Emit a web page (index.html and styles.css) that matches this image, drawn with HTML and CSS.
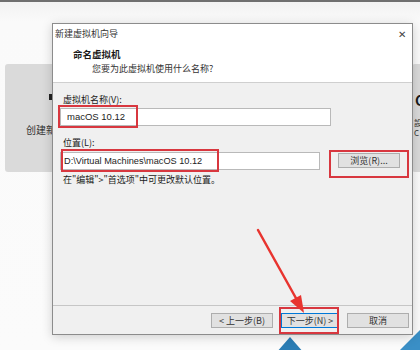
FILE: index.html
```html
<!DOCTYPE html>
<html lang="zh-CN">
<head>
    <meta charset="UTF-8">
    <title>新建虚拟机向导</title>
    <link rel="stylesheet" href="styles.css">
</head>
<body>
    <div class="desktop">
        <div class="card card-left">
            <span class="card-mark"></span>
            <span class="card-text">创建新虚拟机</span>
        </div>
        <div class="card card-right">
            <span class="card-title">C</span>
            <span class="card-small">設<br>C</span>
        </div>
        <div class="wallpaper-tri"></div>
        <div class="wallpaper-corner"></div>

        <div class="dialog">
            <div class="titlebar">
                <span>新建虚拟机向导</span>
                <span class="close">✕</span>
            </div>
            <div class="header">
                <h1>命名虚拟机</h1>
                <p>您要为此虚拟机使用什么名称?</p>
            </div>
            <div class="body">
                <label class="field-label">虚拟机名称(V):</label>
                <div class="input input-name">macOS 10.12</div>
                <label class="field-label second">位置(L):</label>
                <div class="row">
                    <div class="input input-path">D:\Virtual Machines\macOS 10.12</div>
                    <div class="button browse">浏览(R)...</div>
                </div>
                <p class="hint">在"编辑">"首选项"中可更改默认位置。</p>
            </div>
            <div class="footer">
                <div class="button">&lt; 上一步(B)</div>
                <div class="button default">下一步(N) &gt;</div>
                <div class="button">取消</div>
            </div>
        </div>

        <!-- 红色标注 -->
        <div class="mark mark-name"></div>
        <div class="mark mark-path"></div>
        <div class="mark mark-browse"></div>
        <div class="mark mark-next"></div>

        <svg class="arrow" width="420" height="350" viewBox="0 0 420 350">
            <line x1="258" y1="230" x2="297" y2="300" stroke="#e8342f" stroke-width="2.5" stroke-linecap="round"/>
            <polygon points="304,313 290,301 301,295" fill="#e8342f"/>
        </svg>
    </div>
</body>
</html>
```

FILE: styles.css
```css
body {
    margin: 0;
    font-family: "Microsoft YaHei", "Noto Sans CJK SC", "Noto Sans", sans-serif;
    color: #1a1a1a;
}

.desktop {
    position: relative;
    width: 420px;
    height: 350px;
    overflow: hidden;
    background: linear-gradient(#f2f2f2, #fafafa 20px, #fbfbfb);
    border-top: 2px solid #6f6f6f;
    box-sizing: border-box;
}

/* 背景里的卡片 */
.card {
    position: absolute;
    top: 62px;
    height: 108px;
    background-color: #dadada;
    border-radius: 3px;
}
.card-left {
    left: 5px;
    width: 60px;
}
.card-mark {
    position: absolute;
    left: 44px;
    top: 30px;
    width: 3px;
    height: 6px;
    background: #222;
}
.card-text {
    position: absolute;
    left: 21px;
    top: 58px;
    font-size: 10px;
    white-space: nowrap;
    color: #333;
}
.card-right {
    left: 412px;
    width: 8px;
    border-radius: 3px 0 0 3px;
    overflow: hidden;
}
.card-title {
    position: absolute;
    left: 3px;
    top: 28px;
    font-size: 14px;
    font-weight: bold;
    line-height: 16px;
}
.card-small {
    position: absolute;
    left: 2px;
    top: 54px;
    font-size: 8px;
    line-height: 10px;
    color: #333;
}

.wallpaper-tri {
    position: absolute;
    left: 276px;
    top: 335px;
    width: 0;
    height: 0;
    border-left: 14px solid transparent;
    border-right: 14px solid transparent;
    border-bottom: 16px solid #2b7db5;
}
.wallpaper-corner {
    position: absolute;
    left: 396px;
    top: 326px;
    width: 0;
    height: 0;
    border-left: 26px solid transparent;
    border-bottom: 26px solid #3a8fc6;
}

/* 对话框 */
.dialog {
    position: absolute;
    left: 52px;
    top: 21px;
    width: 361px;
    height: 312px;
    box-sizing: border-box;
    border: 1px solid #8c8c8c;
    background: #f0f0f0;
    display: flex;
    flex-direction: column;
    box-shadow: 0 2px 10px rgba(0,0,0,0.18);
    font-size: 9px;
}
.titlebar {
    height: 19px;
    background: #fff;
    display: flex;
    justify-content: space-between;
    align-items: center;
    padding: 0 6px 0 2px;
    color: #333;
}
.close {
    font-size: 10px;
    color: #444;
}
.header {
    height: 40px;
    background: #fff;
    border-bottom: 1px solid #cfcfcf;
    padding-top: 5px;
    box-sizing: border-box;
}
.header h1 {
    margin: 0;
    padding-left: 20px;
    font-size: 9.5px;
    line-height: 13px;
    font-weight: bold;
}
.header p {
    margin: 1px 0 0;
    padding-left: 39px;
    font-size: 9px;
    line-height: 14px;
    color: #333;
}

.body {
    flex: 1;
    padding: 10px 0 0 7px;
    display: flex;
    flex-direction: column;
    align-items: flex-start;
}
.field-label {
    padding-left: 3px;
    line-height: 14px;
    margin-bottom: 1px;
}
.field-label.second {
    margin-top: 10px;
    margin-bottom: 2px;
}
.input {
    height: 18px;
    box-sizing: border-box;
    background: #fff;
    border: 1px solid #b9b9b9;
    padding-left: 6px;
    font-family: "Liberation Sans", "Noto Sans CJK SC", sans-serif;
    font-size: 9.5px;
    line-height: 16px;
    color: #222;
}
.input-name {
    width: 271px;
}
.row {
    display: flex;
    align-items: flex-start;
    gap: 18px;
}
.input-path {
    width: 260px;
    padding-left: 3px;
    font-size: 9.2px;
}
.hint {
    margin: 3px 0 0 3px;
    line-height: 14px;
}

.button {
    box-sizing: border-box;
    height: 15px;
    background: #e1e1e1;
    border: 1px solid #adadad;
    text-align: center;
    line-height: 13px;
    font-size: 9px;
    color: #333;
}
.browse {
    width: 62px;
    margin-top: 1px;
}

.footer {
    height: 29px;
    box-sizing: border-box;
    border-top: 1px solid #c6c6c6;
    display: flex;
    justify-content: flex-end;
    gap: 8px;
    padding: 7px 3px 0 0;
}
.footer .button {
    width: 62px;
}
.footer .button.default {
    width: 58px;
    border-color: #0078d7;
}

/* 红框标注 */
.mark {
    position: absolute;
    border: 2px solid #d8373f;
    box-sizing: border-box;
}
.mark-name { left: 58px; top: 103px; width: 80px; height: 23px; }
.mark-path { left: 61px; top: 147px; width: 158px; height: 23px; }
.mark-browse { left: 329px; top: 148px; width: 80px; height: 28px; }
.mark-next { left: 279px; top: 305px; width: 60px; height: 27px; }

.arrow {
    position: absolute;
    left: 0;
    top: -2px;
}
```
